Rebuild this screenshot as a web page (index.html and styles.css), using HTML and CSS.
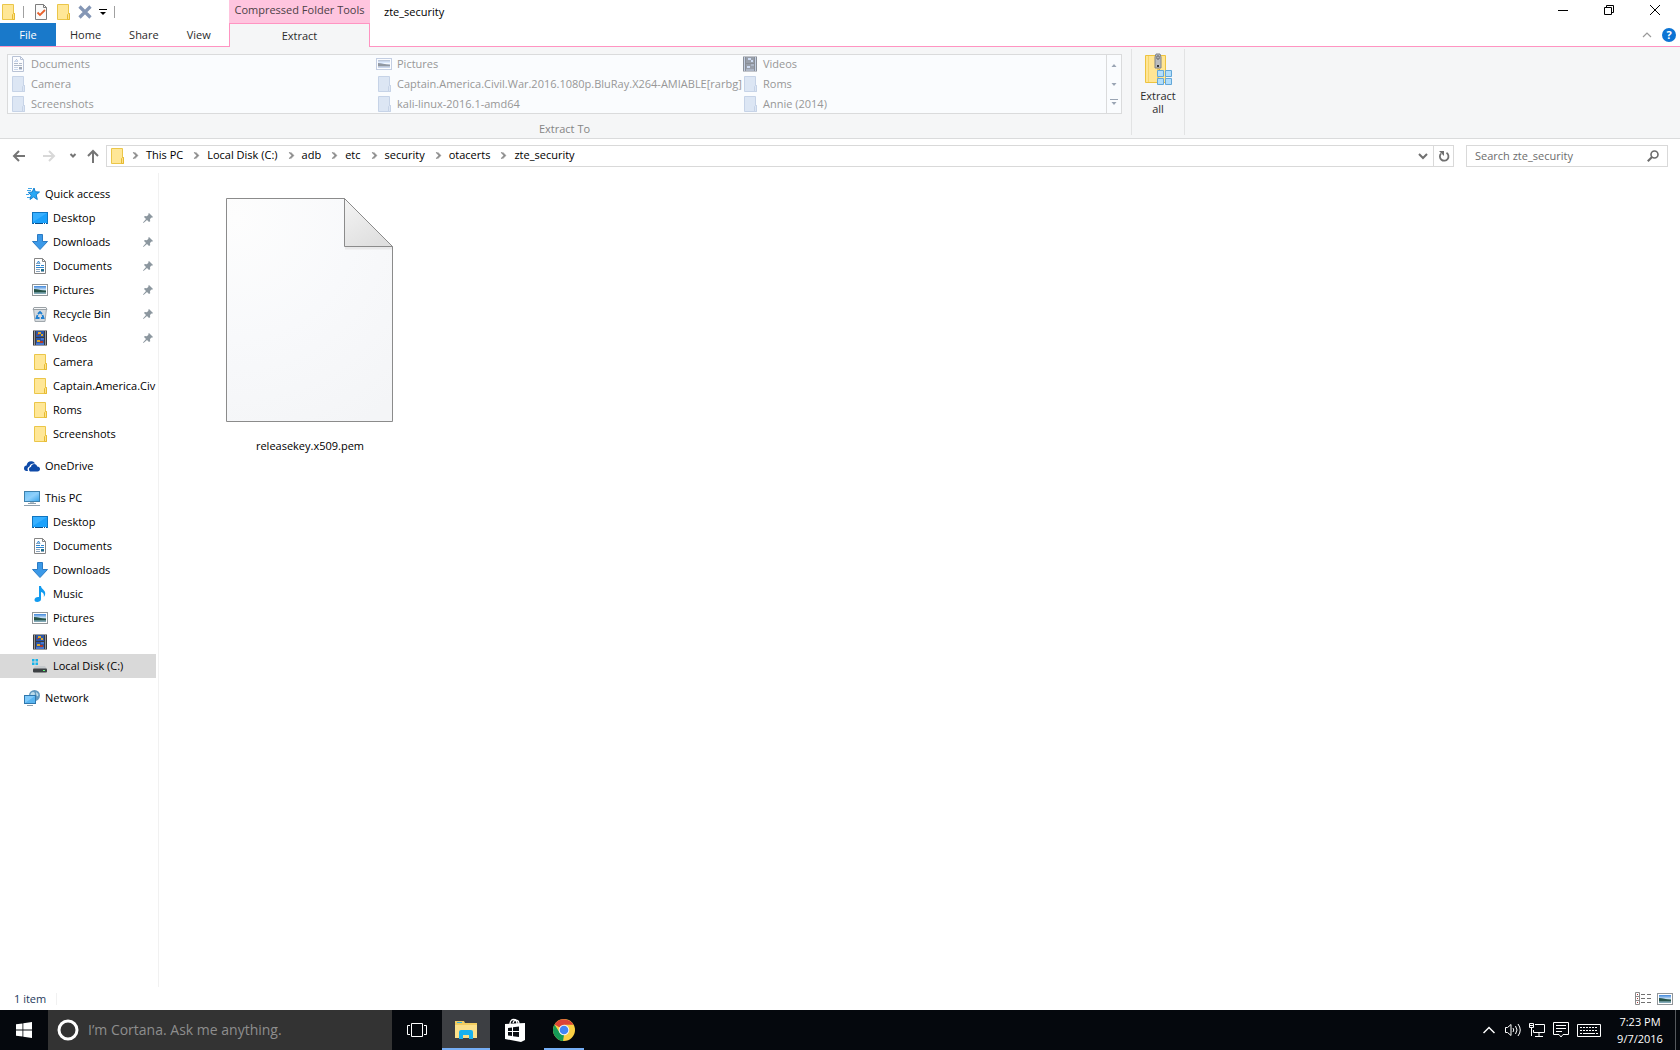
FILE: index.html
```html
<!DOCTYPE html>
<html lang="en">

<head>
    <meta charset="UTF-8">
    <meta name="viewport" content="width=device-width, initial-scale=1.0">
    <title>zte_security</title>
    <link rel="stylesheet" href="styles.css">
</head>

<body>
    <!-- icon sprite -->
    <svg class="sprite" aria-hidden="true">
        <defs>
            <linearGradient id="blueScreen" x1="0" y1="0" x2="1" y2="1">
                <stop offset="0" stop-color="#6cc0f5" />
                <stop offset="0.5" stop-color="#8fd0fb" />
                <stop offset="1" stop-color="#37a3ea" />
            </linearGradient>
            <linearGradient id="sky" x1="0" y1="0" x2="0" y2="1">
                <stop offset="0" stop-color="#3f87dc" />
                <stop offset="0.5" stop-color="#d4e8f7" />
                <stop offset="0.6" stop-color="#39685c" />
                <stop offset="1" stop-color="#8fb5c8" />
            </linearGradient>
            <radialGradient id="paper" gradientUnits="userSpaceOnUse" cx="10" cy="20" r="240">
                <stop offset="0" stop-color="#fdfdfd" />
                <stop offset="0.5" stop-color="#f8f9fb" />
                <stop offset="1" stop-color="#f4f5f7" />
            </radialGradient>
            <linearGradient id="fold" x1="0" y1="0" x2="0.6" y2="1">
                <stop offset="0" stop-color="#f4f4f4" />
                <stop offset="1" stop-color="#dfdfdf" />
            </linearGradient>
        </defs>
        <symbol id="folder" viewBox="0 0 16 16">
            <path class="folder-body" d="M2.5.5h11v9h1v6h-12z" />
            <path class="folder-flap" d="M12.500 15.500v-5l1-1h1v6z" />
        </symbol>
        <symbol id="desktop" viewBox="0 0 16 16">
            <rect x="0.500" y="2.500" width="15" height="11" fill="#1ba1fb" stroke="#0f75c0" />
            <path d="M1 12V3h14z" fill="#38b0ff" />
            <path d="M1 13.500h14" stroke="#0a4f8a" />
            <path d="M2 13.500h1M11 13.500h1M13 13.500h1" stroke="#fff" />
        </symbol>
        <symbol id="download" viewBox="0 0 16 16">
            <path d="M5.500.500h5v7h5L8 15.500.500 7.500h5z" fill="#3b99e8" stroke="#2b7bc4" />
        </symbol>
        <symbol id="document" viewBox="0 0 16 16">
            <path d="M2.500.500h8l3 3v12h-11z" fill="#fff" stroke="#858585" />
            <path d="M10.500.500v3h3" fill="none" stroke="#858585" />
            <path d="M5 6l1.500-3L8 6M4 7.500h4M9 7.500h3M4 9.500h8" fill="none" stroke="#2f86cf" />
            <path d="M4 5.500h3M4 11.500h4M4 13.500h4M9 13.500h3" stroke="#8ba3ba" />
            <path d="M9 11h3v2H9z" fill="#1d6f8c" />
        </symbol>
        <symbol id="picture" viewBox="0 0 16 16">
            <rect x="0.500" y="2.500" width="15" height="11" fill="#fff" stroke="#919699" />
            <rect x="2" y="4" width="12" height="8" fill="url(#sky)" />
            <path d="M2 7c4 0 7 1.500 12 2v1H2z" fill="#265348" />
        </symbol>
        <symbol id="video" viewBox="0 0 16 16">
            <rect x="1" y="0.500" width="14" height="15" fill="#3a3b3e" />
            <path d="M2.500 1.500v14M13.500 1.500v14" stroke="#f5f5f5" stroke-dasharray="1 1" />
            <path d="M4 1h8v6H4zM4 8h8v7H4z" fill="#2b56a8" />
            <path d="M6 2h3v2H6zM9 4h2v2H9zM5 10h3v2H5z" fill="#dca72c" />
            <path d="M8 11h3v2H8zM5 4h2v1H5z" fill="#b03b25" />
            <path d="M4 13h8v2H4zM9 8h3v2H9z" fill="#4778cf" />
        </symbol>
        <symbol id="bin" viewBox="0 0 16 16">
            <path d="M1.500 2.500h13l-1.500 13H3z" fill="#d5dade" stroke="#a1a8ad" />
            <path d="M2 1.500h12l1 2H1z" fill="#f6f7f8" stroke="#9aa1a6" />
            <path d="M6 8l2-2 2 2M5.500 9l-1 3h3M10.500 9l1 3H9" fill="none" stroke="#1f7fd1" stroke-width="1.800" />
        </symbol>
        <symbol id="star" viewBox="0 0 16 16">
            <path d="M10 2l1.300 3.800 4.200.200-3.300 2.800 1.100 4.700L9.500 11 6 13.500l1.200-4.300L4.200 6.400 8.200 6z" fill="#29a8f5" stroke="#1580cf" />
            <path d="M4 2.500h4M3 4.500h4M2 8.500h3M3 11.500h3" stroke="#3fa5e8" />
        </symbol>
        <symbol id="cloud" viewBox="0 0 16 16">
            <path d="M0 10.500c0-2 1-3 2.500-3C3 4.500 5 3 7.500 3.200c2 0 3 1 3.500 2.300-3-.300-5 .500-5.500 3C3.500 9 3 11 4 13H2.500C1 13 0 12 0 10.500z" fill="#0e4aa8" />
            <path d="M5 11.200c0-1.500.700-2.200 2-2.300.300-2 1.700-2.900 3.200-2.900 1.600 0 2.600.900 3 2.500 1.700 0 2.800 1 2.800 2.500s-1 2.500-2.500 2.500H7c-1.300 0-2-.900-2-2.300z" fill="#0e4aa8" />
        </symbol>
        <symbol id="pc" viewBox="0 0 16 16">
            <rect x="0.500" y="1.500" width="15" height="10" fill="url(#blueScreen)" stroke="#3e81ad" />
            <path d="M6 12.500h4" stroke="#b7c2ca" />
            <path d="M0 15.500h16M4 13.500h8" stroke="#8fa0ad" />
        </symbol>
        <symbol id="music" viewBox="0 0 16 16">
            <path d="M7 0h2c0 3 4.500 4 4.200 7.500 0 1.500-.700 2.500-1.400 3.500.700-3-.800-4.500-2.800-5v7.200C9 15 7 16 5.200 16S2.500 15 2.500 13.700c0-1.800 2.300-3.200 4.500-2.700z" fill="#119bf0" />
        </symbol>
        <symbol id="disk" viewBox="0 0 16 16">
            <path d="M0 1h2.500v2.500H0zM3.500 1H6v2.500H3.500zM0 4.500h2.500V7H0zM3.500 4.500H6V7H3.500z" fill="#17b4ea" />
            <path d="M3 8h10l2 3H1z" fill="#c5c9cc" />
            <rect x="1" y="10.500" width="14" height="4" rx="1" fill="#3d4144" />
            <rect x="11" y="12" width="2" height="1" fill="#5dff7a" />
        </symbol>
        <symbol id="network" viewBox="0 0 16 16">
            <circle cx="10.500" cy="5.500" r="5.500" fill="#6299bf" />
            <path d="M7 3c2-2 4-1 4 1s-3 1-3 3-1-1-2-1zM12 2c2 1 3 3 2 4s-2-1-2-4z" fill="#bcdcea" />
            <rect x="0.500" y="5.500" width="11" height="8" fill="#59b4ef" stroke="#2f77ad" />
            <path d="M1 13V6h10z" fill="#7fc9fa" />
            <path d="M3 15.500h6" stroke="#8fa0ad" />
        </symbol>
        <symbol id="pin" viewBox="0 0 10 10">
            <path d="M6 0l4 4-1 .800-.800-.200L7 6.200l.200 2L6 9 4 7 .500 10 0 9.500 3 6 1 4l.800-1 2 .200L5.500 1.800 5.200 1z" fill="#8c979f" />
        </symbol>
        <symbol id="check-doc" viewBox="0 0 16 16">
            <path d="M2.500.500h8l3 3v12h-11z" fill="#fafafa" stroke="#7d7d7d" />
            <path d="M10.500.500v3h3" fill="none" stroke="#7d7d7d" />
            <path d="M4.500 8.500l2.500 2.500 5-5" fill="none" stroke="#e8612c" stroke-width="1.800" />
        </symbol>
    </svg>

    <div class="window">
        <header class="head">
            <div class="quick-bar">
                <svg class="icon"><use href="#folder" /></svg>
                <span class="bar"></span>
                <button aria-label="Properties"><svg class="icon"><use href="#check-doc" /></svg></button>
                <button aria-label="New folder"><svg class="icon"><use href="#folder" /></svg></button>
                <button aria-label="Delete"><svg class="icon" viewBox="0 0 16 16"><path d="M2.500 2.500l11 11M13.500 2.500l-11 11" stroke="#8496b5" stroke-width="3.200" /></svg></button>
                <button aria-label="Customize"><svg width="8" height="8" viewBox="0 0 8 8"><path d="M0 1.500h8" stroke="#000" /><path d="M1 4h6L4 7z" /></svg></button>
                <span class="bar"></span>
            </div>
            <div class="context-title">Compressed Folder Tools</div>
            <div class="title-row">
                <h1>zte_security</h1>
                <div class="controls">
                    <button aria-label="Minimize"><svg width="10" height="10" viewBox="0 0 10 10"><path d="M0 5.500h10" /></svg></button>
                    <button aria-label="Restore"><svg width="10" height="10" viewBox="0 0 10 10"><path d="M.500 2.500h7v7h-7zM2.500 2V.500h7v7H8" /></svg></button>
                    <button aria-label="Close"><svg width="10" height="10" viewBox="0 0 10 10"><path d="M0 0l10 10M10 0L0 10" /></svg></button>
                </div>
            </div>
            <nav class="tabs">
                <button class="tab file">File</button>
                <button class="tab">Home</button>
                <button class="tab">Share</button>
                <button class="tab">View</button>
            </nav>
            <button class="tab active">Extract</button>
            <div class="tabs-end">
                <button aria-label="Minimize the ribbon"><svg width="10" height="6" viewBox="0 0 10 6"><path d="M1 5l4-4 4 4" fill="none" stroke="#9a9a9a" stroke-width="1.200" /></svg></button>
                <button class="help" aria-label="Help">?</button>
            </div>
        </header>

        <section class="ribbon">
            <div class="group extract-to">
                <div class="gallery">
                    <ul>
                        <li><svg class="icon dim"><use href="#document" /></svg>Documents</li>
                        <li><svg class="icon dim"><use href="#picture" /></svg>Pictures</li>
                        <li><svg class="icon dim"><use href="#video" /></svg>Videos</li>
                        <li><svg class="icon"><use href="#folder" /></svg>Camera</li>
                        <li><svg class="icon"><use href="#folder" /></svg>Captain.America.Civil.War.2016.1080p.BluRay.X264-AMIABLE[rarbg]</li>
                        <li><svg class="icon"><use href="#folder" /></svg>Roms</li>
                        <li><svg class="icon"><use href="#folder" /></svg>Screenshots</li>
                        <li><svg class="icon"><use href="#folder" /></svg>kali-linux-2016.1-amd64</li>
                        <li><svg class="icon"><use href="#folder" /></svg>Annie (2014)</li>
                    </ul>
                    <div class="scroller">
                        <button aria-label="Row up" disabled><svg width="8" height="8" viewBox="0 0 8 8"><path d="M1.500 6L4 3l2.500 3z" /></svg></button>
                        <button aria-label="Row down" disabled><svg width="8" height="8" viewBox="0 0 8 8"><path d="M1.500 3L4 6l2.500-3z" /></svg></button>
                        <button aria-label="More" disabled><svg width="8" height="8" viewBox="0 0 8 8"><path d="M0 0h8v1H0zM1.500 3L4 6l2.500-3z" /></svg></button>
                    </div>
                </div>
                <p class="group-name">Extract To</p>
            </div>
            <div class="group extract-all">
                <button>
                    <svg width="32" height="32" viewBox="0 0 32 32">
                        <path d="M3.500 2.500h20v27h-20z" fill="#ffe594" stroke="#edc33f" />
                        <path d="M6.500 3v26" stroke="#f6d56a" />
                        <path d="M16 3v27M17.500 16v14" stroke="#d9ae35" stroke-dasharray="2 1" />
                        <path d="M14 1h4l1 3v11h-6V4z" fill="#b9bcbf" stroke="#808487" />
                        <path d="M15 3h2v3h-2z" fill="#fff" stroke="#5c5f62" />
                        <path d="M15 12h2v2h-2z" fill="#333" />
                        <path d="M15.500 17.500h6v6h-6zM23.500 17.500h6v6h-6zM15.500 25.500h6v6h-6zM23.500 25.500h6v6h-6z" fill="#b2defb" stroke="#63a7d8" />
                    </svg>
                    <span>Extract all</span>
                </button>
            </div>
        </section>

        <div class="location">
            <button class="arrow" aria-label="Back"><svg width="14" height="14" viewBox="0 0 14 14"><path d="M13 7H2M7 2L2 7l5 5" /></svg></button>
            <button class="arrow off" aria-label="Forward" disabled><svg width="14" height="14" viewBox="0 0 14 14"><path d="M1 7h11M7 2l5 5-5 5" /></svg></button>
            <button class="arrow recent" aria-label="Recent locations"><svg width="8" height="6" viewBox="0 0 8 6"><path d="M1.500 1L4 3.500 6.500 1" /></svg></button>
            <button class="arrow up" aria-label="Up"><svg width="14" height="14" viewBox="0 0 14 14"><path d="M7 14V2M2 7l5-5 5 5" /></svg></button>
            <div class="address">
                <svg class="icon"><use href="#folder" /></svg>
                <ol>
                    <li><a href="#">This PC</a></li>
                    <li><a href="#">Local Disk (C:)</a></li>
                    <li><a href="#">adb</a></li>
                    <li><a href="#">etc</a></li>
                    <li><a href="#">security</a></li>
                    <li><a href="#">otacerts</a></li>
                    <li><a href="#">zte_security</a></li>
                </ol>
                <button class="history" aria-label="Previous locations"><svg width="10" height="8" viewBox="0 0 10 8"><path d="M1 2l4 4 4-4" fill="none" stroke="#707070" stroke-width="2" /></svg></button>
                <button class="refresh" aria-label="Refresh"><svg width="12" height="12" viewBox="0 0 12 12"><path d="M8.500 2.800A4.300 4.300 0 1 1 3 3.500" fill="none" stroke="#707070" stroke-width="1.800" /><path d="M1 1h5v5z" fill="#707070" /></svg></button>
            </div>
            <div class="search">
                <input type="search" aria-label="Search zte_security" placeholder="Search zte_security">
                <svg width="12" height="12" viewBox="0 0 12 12"><circle cx="7.500" cy="4.500" r="3.500" fill="none" stroke="#6b6b6b" stroke-width="1.600" /><path d="M5 7L.800 11.200" stroke="#6b6b6b" stroke-width="2" /></svg>
            </div>
        </div>

        <main class="content">
            <nav class="tree">
                <ul>
                    <li><a class="root" href="#"><svg class="icon"><use href="#star" /></svg>Quick access</a></li>
                    <li><a href="#"><svg class="icon"><use href="#desktop" /></svg>Desktop<svg class="pin"><use href="#pin" /></svg></a></li>
                    <li><a href="#"><svg class="icon"><use href="#download" /></svg>Downloads<svg class="pin"><use href="#pin" /></svg></a></li>
                    <li><a href="#"><svg class="icon"><use href="#document" /></svg>Documents<svg class="pin"><use href="#pin" /></svg></a></li>
                    <li><a href="#"><svg class="icon"><use href="#picture" /></svg>Pictures<svg class="pin"><use href="#pin" /></svg></a></li>
                    <li><a href="#"><svg class="icon"><use href="#bin" /></svg>Recycle Bin<svg class="pin"><use href="#pin" /></svg></a></li>
                    <li><a href="#"><svg class="icon"><use href="#video" /></svg>Videos<svg class="pin"><use href="#pin" /></svg></a></li>
                    <li><a href="#"><svg class="icon"><use href="#folder" /></svg>Camera</a></li>
                    <li><a href="#"><svg class="icon"><use href="#folder" /></svg>Captain.America.Civ</a></li>
                    <li><a href="#"><svg class="icon"><use href="#folder" /></svg>Roms</a></li>
                    <li><a href="#"><svg class="icon"><use href="#folder" /></svg>Screenshots</a></li>
                </ul>
                <ul>
                    <li><a class="root" href="#"><svg class="icon"><use href="#cloud" /></svg>OneDrive</a></li>
                </ul>
                <ul>
                    <li><a class="root" href="#"><svg class="icon"><use href="#pc" /></svg>This PC</a></li>
                    <li><a href="#"><svg class="icon"><use href="#desktop" /></svg>Desktop</a></li>
                    <li><a href="#"><svg class="icon"><use href="#document" /></svg>Documents</a></li>
                    <li><a href="#"><svg class="icon"><use href="#download" /></svg>Downloads</a></li>
                    <li><a href="#"><svg class="icon"><use href="#music" /></svg>Music</a></li>
                    <li><a href="#"><svg class="icon"><use href="#picture" /></svg>Pictures</a></li>
                    <li><a href="#"><svg class="icon"><use href="#video" /></svg>Videos</a></li>
                    <li><a class="selected" href="#"><svg class="icon"><use href="#disk" /></svg>Local Disk (C:)</a></li>
                </ul>
                <ul>
                    <li><a class="root" href="#"><svg class="icon"><use href="#network" /></svg>Network</a></li>
                </ul>
            </nav>
            <div class="files">
                <figure class="file-item">
                    <svg width="168" height="226" viewBox="0 0 168 226">
                        <path d="M.500.500h118l48 48v175H.500z" fill="url(#paper)" stroke="#8b8b8b" />
                        <path d="M119 50h47" stroke="#e9e9ea" stroke-width="3" />
                        <path d="M118.500.500l48 48h-48z" fill="url(#fold)" stroke="#8b8b8b" />
                    </svg>
                    <figcaption>releasekey.x509.pem</figcaption>
                </figure>
            </div>
        </main>

        <footer class="status">
            <span class="count">1 item</span>
            <div class="views">
                <button aria-label="Details view"><svg width="16" height="14" viewBox="0 0 16 14"><path d="M.500.500h4v12h-4zM0 4.500h5M0 8.500h5" fill="none" stroke="#8a8a8a" /><path d="M2 2.500h1M2 6.500h1M2 10.500h1" stroke="#a33" /><path d="M6 2.500h4M12 2.500h4M6 6.500h4M12 6.500h4M6 10.500h4M12 10.500h4" stroke="#707070" /></svg></button>
                <button aria-label="Large icons view"><svg class="icon"><use href="#picture" /></svg></button>
            </div>
        </footer>
    </div>

    <div class="taskbar">
        <button class="start" aria-label="Start"><svg width="16" height="16" viewBox="0 0 16 16"><path d="M0 2.300l6.500-.900v6.200H0zM7.300 1.200L16 0v7.600H7.300zM0 8.400h6.500v6.200L0 13.700zM7.300 8.400H16V16l-8.700-1.200z" fill="#fff" /></svg></button>
        <div class="cortana">
            <svg width="22" height="22" viewBox="0 0 22 22"><circle cx="11" cy="11" r="9" fill="none" stroke="#fff" stroke-width="3" /></svg>
            <input type="text" aria-label="Ask Cortana" placeholder="I’m Cortana. Ask me anything.">
        </div>
        <div class="apps">
            <button aria-label="Task View"><svg width="20" height="14" viewBox="0 0 20 14"><path d="M4.500.500h11v13h-11zM3 2.500H.500v9H3M17 2.500h2.500v9H17" fill="none" stroke="#fff" /></svg></button>
            <button class="current" aria-label="File Explorer">
                <svg width="22" height="20" viewBox="0 0 22 20">
                    <path d="M0 1h9l1 2h12v15H0z" fill="#f2cd60" />
                    <path d="M0 5h22v13H0z" fill="#fbe08a" />
                    <path d="M2 2h5v1H2z" fill="#3fb0d8" />
                    <path d="M4 12q0-2 2-2h10q2 0 2 2v7h-4v-4H8v4H4z" fill="#17b1ef" />
                </svg>
            </button>
            <button aria-label="Store">
                <svg width="22" height="24" viewBox="0 0 22 24">
                    <path d="M6 6c0-6 7-6 7 0M9 5c1-4 6-4 6 1" fill="none" stroke="#fff" stroke-width="1.300" />
                    <path d="M1 6l20-1v17l-4 2L1 21z" fill="#fff" />
                    <path d="M4 10l4-.500V13H4zM9 9.300l6-.800V13H9zM4 14h4v4l-4-.500zM9 14h6v5l-6-.800z" fill="#0a0d12" />
                </svg>
            </button>
            <button class="open" aria-label="Chrome">
                <svg width="22" height="22" viewBox="0 0 22 22">
                    <circle cx="11" cy="11" r="11" fill="#fbd043" />
                    <path d="M11 11L1.500 5.500A11 11 0 0 1 20.500 5.700H11z" fill="#db4437" />
                    <path d="M1.500 5.500L6.500 13.500 11 16l-1 6A11 11 0 0 1 1.500 5.500z" fill="#159a57" />
                    <circle cx="11" cy="11" r="5.300" fill="#f5f5f5" />
                    <circle cx="11" cy="11" r="4.300" fill="#4285f4" />
                </svg>
            </button>
        </div>
        <div class="tray">
            <button aria-label="Show hidden icons"><svg width="12" height="8" viewBox="0 0 12 8"><path d="M.500 7L6 1.500 11.500 7" stroke-width="1.500" /></svg></button>
            <button aria-label="Volume"><svg width="16" height="14" viewBox="0 0 16 14"><path d="M.500 4.500h2l3.500-3v11l-3.500-3h-2zM8 5q1.500 2 0 4M10.500 3q3 4 0 8M13 1q4.500 6 0 12" /></svg></button>
            <button aria-label="Network"><svg width="16" height="14" viewBox="0 0 16 14"><path d="M6 1.500h9.500v8h-11V7M.500.500h4v4h-4zM2.500 5v8M10 10v3M6 13.500h8M1 2.500h3" /></svg></button>
            <button aria-label="Notifications"><svg width="16" height="16" viewBox="0 0 16 16"><path d="M.500.500h15v12H10L8 15l-2-2.500H.500zM3 3.500h10M3 6.500h10M3 9.500h6" /></svg></button>
            <button aria-label="Touch keyboard"><svg width="24" height="13" viewBox="0 0 24 13"><path d="M.500.500h23v12H.500z" /><path d="M3 3.500h18M3 6.500h18" stroke-dasharray="2 1" /><path d="M3 9.500h2M6 9.500h12M19 9.500h2" /></svg></button>
            <time class="clock"><span>7:23 PM</span><span>9/7/2016</span></time>
            <button class="show-desktop" aria-label="Show desktop"></button>
        </div>
    </div>
</body>

</html>
```

FILE: styles.css
```css
* {
    box-sizing: border-box;
}

body {
    margin: 0;
    height: 100vh;
    display: flex;
    flex-direction: column;
    background: #fff;
    color: #000;
    font-family: "Open Sans", "Noto Sans", sans-serif;
    font-size: 11px;
    line-height: 16px;
}

button {
    display: flex;
    align-items: center;
    justify-content: center;
    margin: 0;
    padding: 0;
    border: 0;
    background: none;
    color: inherit;
    font: inherit;
}

input {
    flex: 1;
    min-width: 0;
    height: 20px;
    padding: 0;
    border: 0;
    outline: 0;
    background: none;
    font: inherit;
    line-height: 20px;
}

a {
    color: inherit;
    text-decoration: none;
}

ul, ol {
    margin: 0;
    padding: 0;
    list-style: none;
}

svg {
    flex: none;
}

.sprite {
    position: absolute;
    width: 0;
    height: 0;
}

.icon {
    width: 16px;
    height: 16px;
}

.folder-body {
    fill: var(--folder-fill, #ffe797);
    stroke: var(--folder-line, #ebc649);
}

.folder-flap {
    fill: var(--folder-fill, #ffe28a);
    stroke: var(--folder-line, #e6bb33);
}

.window {
    flex: 1;
    min-height: 0;
    display: flex;
    flex-direction: column;
}

/* title bar and tabs */
.head {
    display: grid;
    grid-template-columns: 229px 141px 1fr;
    grid-template-rows: 23px 24px;
}

.quick-bar {
    display: flex;
    align-items: center;
    gap: 6px;
}

.bar {
    width: 1px;
    height: 12px;
    margin: 0 3px 0 1px;
    background: #a0a0a0;
}

.context-title {
    text-align: center;
    line-height: 20px;
    background: #ffc5df;
    color: #4b3f46;
    white-space: nowrap;
}

.title-row {
    display: flex;
    justify-content: space-between;
    padding: 0 2px 0 14px;
}

.title-row h1 {
    margin: 0;
    font-size: 11px;
    font-weight: normal;
    line-height: 24px;
}

.controls {
    display: flex;
}

.controls button {
    width: 46px;
    height: 20px;
}

.controls path {
    fill: none;
    stroke: #000;
}

.tabs {
    display: flex;
    border-bottom: 1px solid #ff94c2;
}

.tab {
    padding: 0 14px;
    color: #2b2b2b;
}

.tab.file {
    width: 56px;
    background: #1979ca;
    color: #fff;
}

.tab.active {
    border: 1px solid #ff94c2;
    border-bottom: 0;
    background: #f5f6f7;
}

.tabs-end {
    display: flex;
    align-items: center;
    justify-content: flex-end;
    gap: 10px;
    padding-right: 4px;
    border-bottom: 1px solid #ff94c2;
}

.help {
    width: 14px;
    height: 14px;
    border-radius: 50%;
    background: #0c74d4;
    color: #fff;
    font-weight: bold;
}

/* ribbon */
.ribbon {
    display: flex;
    height: 92px;
    border-bottom: 1px solid #dadbdc;
    background: #f5f6f7;
}

.group {
    border-right: 1px solid #e2e3e4;
    margin: 2px 0 3px;
}

.extract-to {
    padding: 5px 9px 0 7px;
}

.gallery {
    display: flex;
    height: 60px;
    border: 1px solid #dadbdc;
    background: #fafcfe;
    color: #979797;
    --folder-fill: #dce6f4;
    --folder-line: #c6d3e7;
}

.gallery ul {
    display: grid;
    grid-template-columns: 366px 366px 364px;
    grid-auto-rows: 20px;
    padding-left: 2px;
    margin-top: -1px;
}

.gallery li {
    display: flex;
    align-items: center;
    gap: 5px;
    white-space: nowrap;
}

.dim {
    filter: grayscale(1) sepia(0.8) hue-rotate(180deg);
    opacity: 0.6;
}

.scroller {
    display: flex;
    flex-direction: column;
    width: 15px;
    border-left: 1px solid #dadbdc;
}

.scroller button {
    flex: 1;
}

.scroller path {
    fill: #9aa5b4;
}

.group-name {
    margin: 7px 0 0;
    text-align: center;
    color: #858585;
}

.extract-all button {
    flex-direction: column;
    width: 52px;
    padding-top: 4px;
    line-height: 13px;
    color: #2b2b2b;
}

.extract-all span {
    width: 40px;
    padding-top: 4px;
}

/* address row */
.location {
    display: flex;
    align-items: center;
    height: 34px;
    padding: 0 12px;
}

.arrow {
    width: 14px;
    height: 22px;
    margin-right: 16px;
}

.arrow path {
    fill: none;
    stroke: #757575;
    stroke-width: 2;
}

.arrow.off path {
    stroke: #d8d8d8;
}

.arrow.off {
    margin-right: 10px;
}

.arrow.recent,
.arrow.up {
    margin-right: 6px;
}

.address {
    flex: 1;
    display: flex;
    align-items: center;
    height: 22px;
    padding-left: 2px;
    border: 1px solid #d9d9d9;
}

.address ol {
    flex: 1;
    display: flex;
    padding-left: 6px;
}

.address li {
    display: flex;
    align-items: center;
    line-height: 18px;
    padding-bottom: 2px;
}

.address li::before {
    content: "";
    width: 4px;
    height: 4px;
    border: solid #808080;
    border-width: 1px 1px 0 0;
    box-shadow: 1px -1px 0 #a0a0a0;
    transform: rotate(45deg);
    margin-right: 10px;
}

.address li + li::before {
    margin-left: 9px;
}

.history {
    width: 20px;
    height: 20px;
}

.refresh {
    width: 20px;
    height: 20px;
    border-left: 1px solid #d9d9d9;
}

.search {
    display: flex;
    align-items: center;
    width: 202px;
    height: 22px;
    margin-left: 12px;
    padding: 0 8px;
    border: 1px solid #d9d9d9;
}

.search input::placeholder {
    color: #6d6d6d;
}

/* navigation tree and files */
.content {
    flex: 1;
    min-height: 0;
    display: flex;
}

.tree {
    width: 159px;
    padding: 9px 2px 0 0;
    border-right: 1px solid #f1f1f1;
}

.tree ul {
    margin-bottom: 8px;
}

.tree a {
    display: flex;
    align-items: center;
    gap: 5px;
    height: 24px;
    padding-left: 32px;
    overflow: hidden;
    white-space: nowrap;
}

.tree a.root {
    padding-left: 24px;
}

.tree .selected {
    background: #d9d9d9;
}

.pin {
    width: 10px;
    height: 10px;
    margin: 0 3px 0 auto;
}

.files {
    flex: 1;
    padding: 25px 67px;
}

.file-item {
    display: flex;
    flex-direction: column;
    align-items: center;
    gap: 14px;
    width: 168px;
    margin: 0;
}

/* status bar */
.status {
    display: flex;
    align-items: center;
    justify-content: space-between;
    height: 23px;
    padding: 0 7px 0 14px;
    color: #1e395b;
}

.count {
    padding-right: 10px;
    border-right: 1px solid #f1f1f1;
    line-height: 12px;
}

.views {
    display: flex;
    gap: 6px;
}

/* taskbar */
.taskbar {
    display: flex;
    height: 40px;
    background: #05080d;
    color: #fff;
}

.start {
    width: 48px;
}

.cortana {
    display: flex;
    align-items: center;
    gap: 9px;
    width: 344px;
    padding: 0 9px;
    background: #333;
    font-size: 14px;
}

.cortana input::placeholder {
    color: #8e8e8e;
}

.apps {
    flex: 1;
    display: flex;
    gap: 1px;
    padding-left: 1px;
}

.apps button {
    width: 48px;
}

.apps .current {
    background: linear-gradient(#76aef5, #76aef5) bottom / 100% 2px no-repeat, #3d3f43;
}

.apps .open {
    background: linear-gradient(#76aef5, #76aef5) bottom / 40px 2px no-repeat;
}

.tray {
    display: flex;
    align-items: center;
    gap: 8px;
}

.tray path {
    fill: none;
    stroke: #fff;
}

.tray > :first-child {
    margin-right: 2px;
}

.clock {
    display: flex;
    flex-direction: column;
    width: 62px;
    text-align: center;
    line-height: 17px;
}

.show-desktop {
    width: 5px;
    height: 40px;
    margin-left: -4px;
    border-left: 1px solid #55585c;
}
```
